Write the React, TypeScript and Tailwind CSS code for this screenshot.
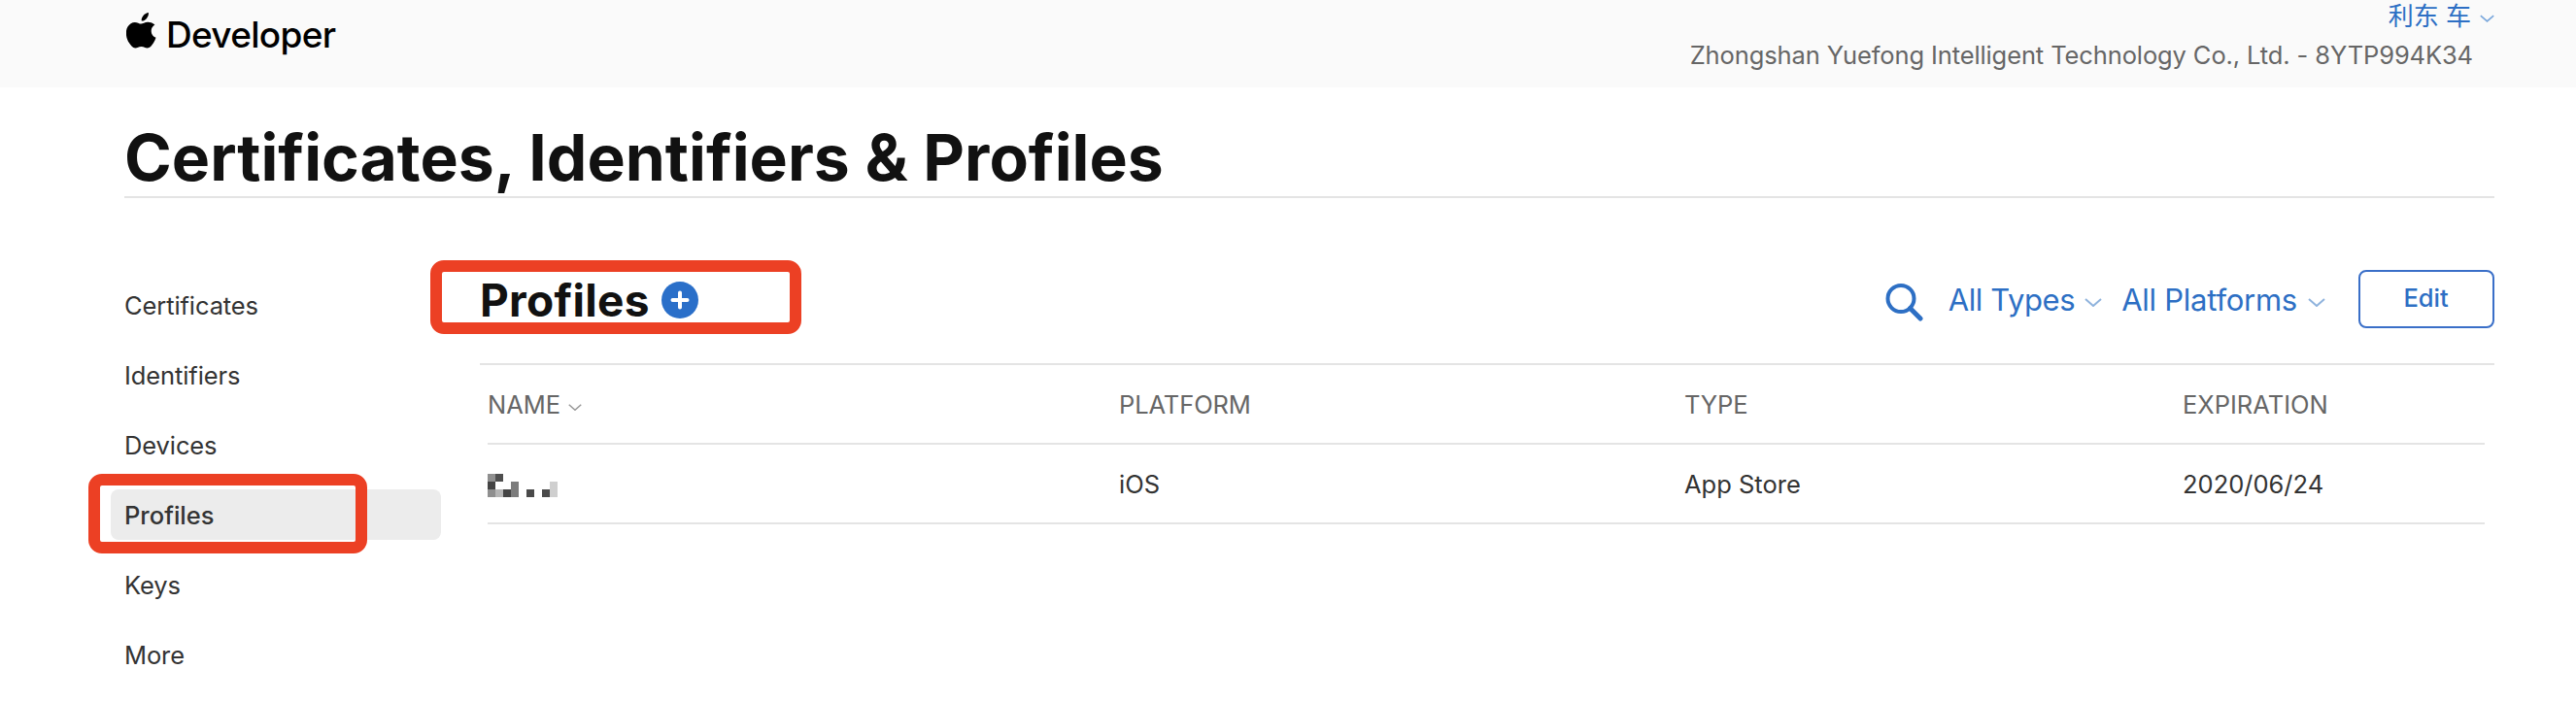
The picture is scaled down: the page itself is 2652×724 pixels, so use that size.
import clsx from "clsx";

const navItems = ["Certificates", "Identifiers", "Devices", "Profiles", "Keys", "More"];

// Redacted profile name, 8px cells: [column, row, colour]
const mosaic: [number, number, string][] = [
  [0, 0, "#8f8f8f"], [1, 0, "#4f4f4f"],
  [0, 1, "#444444"], [3, 1, "#7c7c7c"], [8, 1, "#cfcfcf"],
  [0, 2, "#8f8f8f"], [1, 2, "#b5b5b5"], [2, 2, "#444444"], [3, 2, "#7c7c7c"],
  [5, 2, "#4a4a4a"], [7, 2, "#4a4a4a"], [8, 2, "#cfcfcf"],
];

function Chevron({ className }: { className?: string }) {
  return (
    <svg viewBox="0 0 18 9" fill="none" stroke="currentColor" strokeWidth="2" className={className}>
      <path d="M1 1l8 7 8-7" />
    </svg>
  );
}

function SearchIcon({ className }: { className?: string }) {
  return (
    <svg viewBox="0 0 39 39" fill="none" stroke="currentColor" className={className}>
      <circle cx="16" cy="15.500" r="13.500" strokeWidth="4" />
      <path d="M25.500 25.500l10.500 10.500" strokeWidth="5" strokeLinecap="round" />
    </svg>
  );
}

function AppleLogo() {
  return (
    <svg viewBox="0 0 31 37" className="h-[37px] w-[31px]" fill="#000">
      <path d="M22.9 0c.3 2.200-.6 4.300-1.900 5.900-1.300 1.600-3.300 2.800-5.300 2.700-.3-2.100.7-4.300 1.900-5.700C18.900 1.300 21.100.1 22.900 0z" />
      <path d="M29.400 12.600c-2.300 1.400-3.700 3.500-3.700 6.300 0 3.200 1.900 5.800 4.800 6.900-.6 2-1.500 3.800-2.700 5.600-1.700 2.500-3.400 5-6.100 5-2.600 0-3.300-1.500-6.200-1.500-2.900 0-3.800 1.500-6.200 1.600-2.600.1-4.600-2.700-6.300-5.200C-.5 26.300-1.200 18.700 1.500 14.400 3.200 11.700 5.900 10 8.800 9.900c2.600 0 4.700 1.700 6.400 1.700 1.600 0 4.200-2 7.400-1.800 1.300.1 4.700.6 6.800 2.800z" />
    </svg>
  );
}

export default function App() {
  return (
    <div className="h-[724px] w-[2652px] overflow-hidden bg-white font-['Inter','Noto_Sans_CJK_SC',sans-serif] whitespace-nowrap text-[#333]">
      {/* HEADER */}
      <header className="flex h-[90px] justify-between bg-[#fafafa] pr-[84px] pl-[130px]">
        <div className="flex h-[63px] items-center gap-[10px]">
          <AppleLogo />
          <span className="pt-[9px] text-[37px] leading-[54px] font-medium tracking-[-0.7px] text-black">Developer</span>
        </div>
        <div className="flex flex-col items-end">
          <button className="flex h-[37px] items-center gap-[9px] pb-[3px] text-[26px] leading-[34px] text-[#2d6fc4]">
            利东 车
            <Chevron className="mt-1 h-2 w-[15px] text-[#7ba8dc]" />
          </button>
          <p className="mr-[22px] text-[25.5px] leading-[40px] tracking-[-0.11px] text-[#666]">
            Zhongshan Yuefong Intelligent Technology Co., Ltd. - 8YTP994K34
          </p>
        </div>
      </header>

      {/* PAGE TITLE */}
      <div className="mx-[84px] ml-[128px] h-[114px] border-b-2 border-[#e4e4e4] pt-[32px]">
        <h1 className="text-[66px] leading-[80px] font-bold text-[#111]">
          Certificates, Identifiers &amp; Profiles
        </h1>
      </div>

      <div className="flex">
        {/* SIDEBAR */}
        <nav className="ml-[114px] flex w-[340px] flex-col gap-5 pt-[84px]">
          {navItems.map((item) => (
            <a
              key={item}
              className={clsx(
                "relative h-[52px] rounded-lg pl-[14px] text-[25.5px] leading-[54px]",
                item === "Profiles" ? "bg-[#ececec] font-medium" : "tracking-[-0.1px]"
              )}
            >
              {item}
              {item === "Profiles" && (
                <span className="absolute -top-4 -left-[23px] h-[82px] w-[287px] rounded-[14px] border-12 border-[#ec4024]" />
              )}
            </a>
          ))}
        </nav>

        {/* PROFILES LIST */}
        <main className="ml-10 w-[2074px]">
          <div className="relative flex h-[172px] justify-between border-b-2 border-[#e4e4e4]">
            <div className="flex h-[210px] items-center gap-3">
              <h2 className="text-[46px] leading-[56px] font-bold tracking-[0.3px] text-[#111]">Profiles</h2>
              <svg viewBox="0 0 38 38" className="size-[38px]">
                <circle cx="19" cy="19" r="19" fill="#2a6fc9" />
                <path d="M19 11.500v15M11.500 19h15" stroke="#fff" strokeWidth="4" strokeLinecap="round" />
              </svg>
            </div>
            <span className="absolute top-[64px] -left-[51px] h-[76px] w-[382px] rounded-[14px] border-12 border-[#ec4024]" />

            <div className="flex h-[208px] items-center text-[31px] text-[#2d6fc4]">
              <SearchIcon className="mt-[7px] mr-[26px] size-[39px]" />
              <button className="flex items-center gap-[10px] pt-[2px] tracking-[-0.4px]">
                All Types
                <Chevron className="mt-1 h-[9px] w-[18px] text-[#8fb3dd]" />
              </button>
              <button className="ml-[20px] flex items-center gap-[11px] pt-[2px] tracking-[-0.25px]">
                All Platforms
                <Chevron className="mt-1 h-[9px] w-[18px] text-[#8fb3dd]" />
              </button>
              <button className="ml-[34px] h-[60px] w-[140px] rounded-lg border-2 border-[#3a6fc8] pr-px pb-px text-[25.5px] font-medium">
                Edit
              </button>
            </div>
          </div>

          <table className="mr-[10px] ml-[8px] w-[2056px] table-fixed border-separate border-spacing-0 text-left text-[25.5px] [&_td]:border-b-2 [&_td]:border-[#e4e4e4] [&_th]:border-b-2 [&_th]:border-[#e4e4e4]">
            <colgroup>
              <col className="w-[650px]" />
              <col className="w-[582px]" />
              <col className="w-[513px]" />
              <col />
            </colgroup>
            <thead>
              <tr className="h-[82px] text-[#666]">
                <th className="p-0 pt-[2px] font-normal">
                  <span className="flex items-center gap-[8px]">
                    NAME
                    <Chevron className="mt-1 h-[7px] w-[14px] text-[#999]" />
                  </span>
                </th>
                <th className="p-0 pt-[2px] font-normal tracking-[-0.1px]">PLATFORM</th>
                <th className="p-0 pt-[2px] font-normal tracking-[-0.1px]">TYPE</th>
                <th className="p-0 pt-[2px] font-normal">EXPIRATION</th>
              </tr>
            </thead>
            <tbody>
              <tr className="h-[82px]">
                <td className="p-0 pt-[3px]">
                  <svg viewBox="0 0 72 24" className="h-6 w-[72px]" shapeRendering="crispEdges">
                    {mosaic.map(([col, row, fill]) => (
                      <rect key={`${col}-${row}`} x={col * 8} y={row * 8} width="8" height="8" fill={fill} />
                    ))}
                  </svg>
                </td>
                <td className="p-0 pt-[3px]">iOS</td>
                <td className="p-0 pt-[3px]">App Store</td>
                <td className="p-0 pt-[3px]">2020/06/24</td>
              </tr>
            </tbody>
          </table>
        </main>
      </div>
    </div>
  );
}
